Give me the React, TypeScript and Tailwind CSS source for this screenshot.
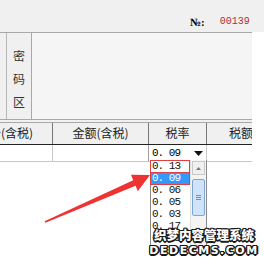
import React from "react";

const cjk = '"Noto Sans CJK SC", "Liberation Sans", sans-serif';

export default function App() {
  const items = ["0. 13", "0. 09", "0. 06", "0. 05", "0. 03", "0. 17", "0. 11"];
  return (
    <div
      className="relative w-[264px] h-[260px] overflow-hidden bg-white text-black"
      style={{ fontFamily: cjk }}
    >
      {/* top band */}
      <div className="h-[32px] bg-[#f0f0f0] flex items-start pt-[15px]">
        <div className="w-[190px]" />
        <span className="text-[11px] font-bold leading-[14px] [font-family:'Liberation_Serif',serif]">№:</span>
        <span className="ml-[15px] text-[10px] leading-[14px] text-[#a8303a] [font-family:'Liberation_Mono',monospace]">00139</span>
      </div>

      <div className="flex">
        <div className="w-[252px] bg-[#f0f0f0]">
          {/* password area */}
          <div className="h-[88px] border-t border-b border-[#a8a8a8] flex">
            <div className="w-[7px] border-r border-[#b8b8b8]" />
            <div className="w-[25px] border-r border-[#a8a8a8] flex flex-col items-center pt-[17px] gap-[11px] text-[12px] leading-[12px] text-[#333]">
              <span>密</span>
              <span>码</span>
              <span>区</span>
            </div>
            <div className="flex-1 bg-[#f5f5f5]" />
          </div>
          {/* header */}
          <div className="h-[23px] mt-[2px] border-t border-b border-t-[#a8a8a8] border-b-[#222] flex text-[12px] leading-[20px] text-[#222] overflow-hidden">
            <div className="w-[53px] shrink-0 border-r border-[#777] flex justify-end pr-[19px] overflow-hidden whitespace-nowrap">
              单价(含税)
            </div>
            <div className="w-[96px] shrink-0 border-r border-[#777] flex justify-center whitespace-nowrap">
              金额(含税)
            </div>
            <div className="w-[58px] shrink-0 border-r border-[#777] flex justify-center">
              税率
            </div>
            <div className="w-[68px] shrink-0 flex justify-center">税额</div>
          </div>
          {/* data row */}
          <div className="h-[17px] border-b border-[#c8c8c8] flex bg-white">
            <div className="w-[53px] shrink-0 border-r border-[#c8c8c8]" />
            <div className="w-[96px] shrink-0 border-r border-[#a0a0a0]" />
            <div className="w-[58px] shrink-0 border-r border-[#c8c8c8] flex items-center pl-[3px]">
              <span className="text-[11px] leading-[12px] [font-family:'Liberation_Mono',monospace] tracking-[-1px]">0. 09</span>
              <div className="ml-auto w-[15px] h-[15px] flex items-center justify-center">
                <svg width="9" height="5" viewBox="0 0 9 5">
                  <path d="M0 0H9L4.5 5Z" fill="#111" />
                </svg>
              </div>
            </div>
            <div className="flex-1" />
          </div>
        </div>
        <div className="flex-1 bg-white" />
      </div>

      {/* dropdown list */}
      <div className="absolute left-[150px] top-[160px] w-[57px] h-[88px] bg-white border-l border-r border-[#8a8a8a] flex">
        <div className="w-[39px] flex flex-col">
          {items.map((t, i) => (
            <div
              key={t + i}
              className={
                "h-[12px] pl-[1px] text-[11px] leading-[12px] [font-family:'Liberation_Mono',monospace] tracking-[-1px] " +
                (i === 1 ? "bg-[#3399ff] text-white" : "text-[#111]")
              }
            >
              {t}
            </div>
          ))}
        </div>
        <div className="flex-1 flex flex-col bg-[#f4f4f4] border-l border-[#e0e0e0]">
          <div className="h-[14px] mt-[1px] mx-[1px] border border-[#c8c8c8] bg-[#f0f0f0] flex items-center justify-center">
            <svg width="5" height="3" viewBox="0 0 5 3">
              <path d="M0 3L2.5 0L5 3Z" fill="#777" />
            </svg>
          </div>
          <div className="h-[37px] mt-[4px] mx-[1px] border border-[#7ea6d4] rounded-[2px] bg-[#cfe3fa] flex items-center justify-center">
            <div className="flex flex-col gap-[1px]">
              <div className="w-[5px] h-[1px] bg-[#6d8fb8]" />
              <div className="w-[5px] h-[1px] bg-[#6d8fb8]" />
              <div className="w-[5px] h-[1px] bg-[#6d8fb8]" />
            </div>
          </div>
        </div>
      </div>

      {/* red focus boxes */}
      <div className="absolute left-[150px] top-[160px] w-[40px] h-[13px] border border-[#e04040]" />
      <div className="absolute left-[150px] top-[172px] w-[40px] h-[13px] border border-[#e04040]" />

      {/* red arrow */}
      <svg className="absolute left-0 top-0" width="264" height="260" viewBox="0 0 264 260">
        <polygon
          points="44.6,221.3 133.2,180.2 131.0,174.8 150,175 137.8,191.2 135.6,185.8 45.4,222.7"
          fill="#ee3333"
        />
      </svg>

      {/* watermark */}
      <div className="absolute left-[153px] top-[226px] w-[102px] flex flex-col items-center text-white font-black [text-shadow:1px_0_0_#1a1a1a,-1px_0_0_#1a1a1a,0_1px_0_#1a1a1a,0_-1px_0_#1a1a1a,1px_1px_0_#1a1a1a,-1px_-1px_0_#1a1a1a,1px_-1px_0_#1a1a1a,-1px_1px_0_#1a1a1a,2px_0_0_#1a1a1a,0_2px_0_#1a1a1a]">
        <span className="text-[12.5px] leading-[18px] whitespace-nowrap">织梦内容管理系统</span>
        <span className="text-[11px] leading-[13px] tracking-[1.5px] whitespace-nowrap [font-family:'DejaVu_Sans',sans-serif]">DEDECMS.COM</span>
      </div>
    </div>
  );
}
